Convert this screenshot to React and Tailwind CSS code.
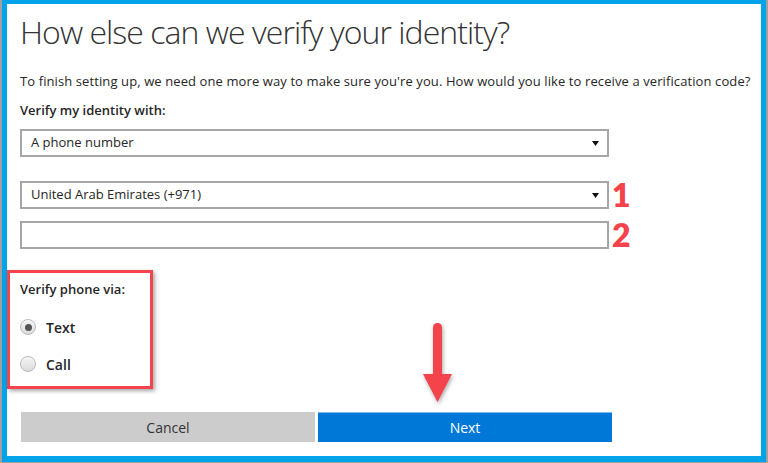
import React from "react";

const font = { fontFamily: '"Open Sans", "Noto Sans", "Liberation Sans", sans-serif' };

function Caret() {
  return (
    <svg width="7" height="5" viewBox="0 0 7 5" className="shrink-0">
      <path d="M0 0 H7 L3.5 5 Z" fill="#111" />
    </svg>
  );
}

function Num({ children }) {
  return (
    <span
      className="ml-[3px] h-[28px] flex items-center text-[#f4434a] font-extrabold text-[32px] leading-[28px]"
      style={{ fontFamily: '"Lato", "Open Sans", sans-serif' }}
    >
      {children}
    </span>
  );
}

function SelectBox({ label, num }) {
  return (
    <div className="flex items-center h-[28px]">
      <div className="w-[589px] h-[28px] border-2 border-[#a6a6a6] bg-white flex items-center justify-between pl-[9px] pr-[8px]">
        <span className="text-[13px] text-[#262626]">{label}</span>
        <Caret />
      </div>
      {num && <Num>{num}</Num>}
    </div>
  );
}

function Radio({ checked, label }) {
  return (
    <div className="flex items-center h-[20px]">
      <div className="w-[16px] h-[16px] rounded-full border border-[#b8b8b8] bg-gradient-to-b from-[#f4f4f4] to-[#dcdcdc] flex items-center justify-center shadow-[inset_0_1px_1px_rgba(255,255,255,0.8)]">
        {checked && <div className="w-[7px] h-[7px] rounded-full bg-[#555]" />}
      </div>
      <span className="ml-[10px] text-[14px] font-semibold text-[#262626]">{label}</span>
    </div>
  );
}

export default function App() {
  return (
    <div className="w-[768px] h-[463px] bg-[#a0a0a0] pl-[2px] pr-[2px] pb-[1px] overflow-hidden" style={font}>
      <div className="relative w-full h-full border-[#00a2e8] border-l-[5px] border-r-[5px] border-t-[4px] border-b-[6px] bg-white">
        <div className="flex flex-col pl-[13px]">
          <h1 className="mt-[8px] text-[32px] leading-[40px] font-light text-[#333] tracking-[-0.95px]">
            How else can we verify your identity?
          </h1>
          <p className="mt-[20px] text-[13px] leading-[18px] text-[#262626] tracking-[0.1px]">
            To finish setting up, we need one more way to make sure you're you. How would you like to receive a verification code?
          </p>
          <div className="mt-[11px] text-[13px] leading-[18px] font-semibold text-[#262626]">Verify my identity with:</div>
          <div className="mt-[10px]">
            <SelectBox label="A phone number" />
          </div>
          <div className="mt-[24px]">
            <SelectBox label="United Arab Emirates (+971)" num="1" />
          </div>
          <div className="mt-[12px] flex items-center h-[28px]">
            <div className="w-[589px] h-[28px] border-2 border-[#a6a6a6] bg-white" />
            <Num>2</Num>
          </div>
          <div className="mt-[31px] text-[13px] leading-[18px] font-semibold text-[#262626]">Verify phone via:</div>
          <div className="mt-[19px] flex flex-col gap-[17px]">
            <Radio checked label="Text" />
            <Radio label="Call" />
          </div>
          <div className="mt-[38px] ml-[1px] flex gap-[3px]">
            <button className="w-[294px] h-[30px] bg-[#cccccc] text-[14px] text-[#333]">Cancel</button>
            <button className="w-[294px] h-[30px] bg-[#0078d7] border-t border-[#7fbdf0] text-[14px] text-white">Next</button>
          </div>
        </div>

        {/* annotation: red box */}
        <div className="absolute left-[0px] top-[266px] w-[146px] h-[119px] border-[3px] border-[#f4434a] shadow-[2px_2px_4px_rgba(0,0,0,0.35)]" />

        {/* annotation: arrow */}
        <svg className="absolute left-[412px] top-[316px]" width="44" height="90" viewBox="0 0 44 90" style={{ filter: "drop-shadow(1px 2px 2px rgba(0,0,0,0.35))" }}>
          <rect x="14" y="3" width="9" height="58" rx="4.5" fill="#f4434a" />
          <path d="M4 54 H33 L18.5 82 Z" fill="#f4434a" />
        </svg>
      </div>
    </div>
  );
}
